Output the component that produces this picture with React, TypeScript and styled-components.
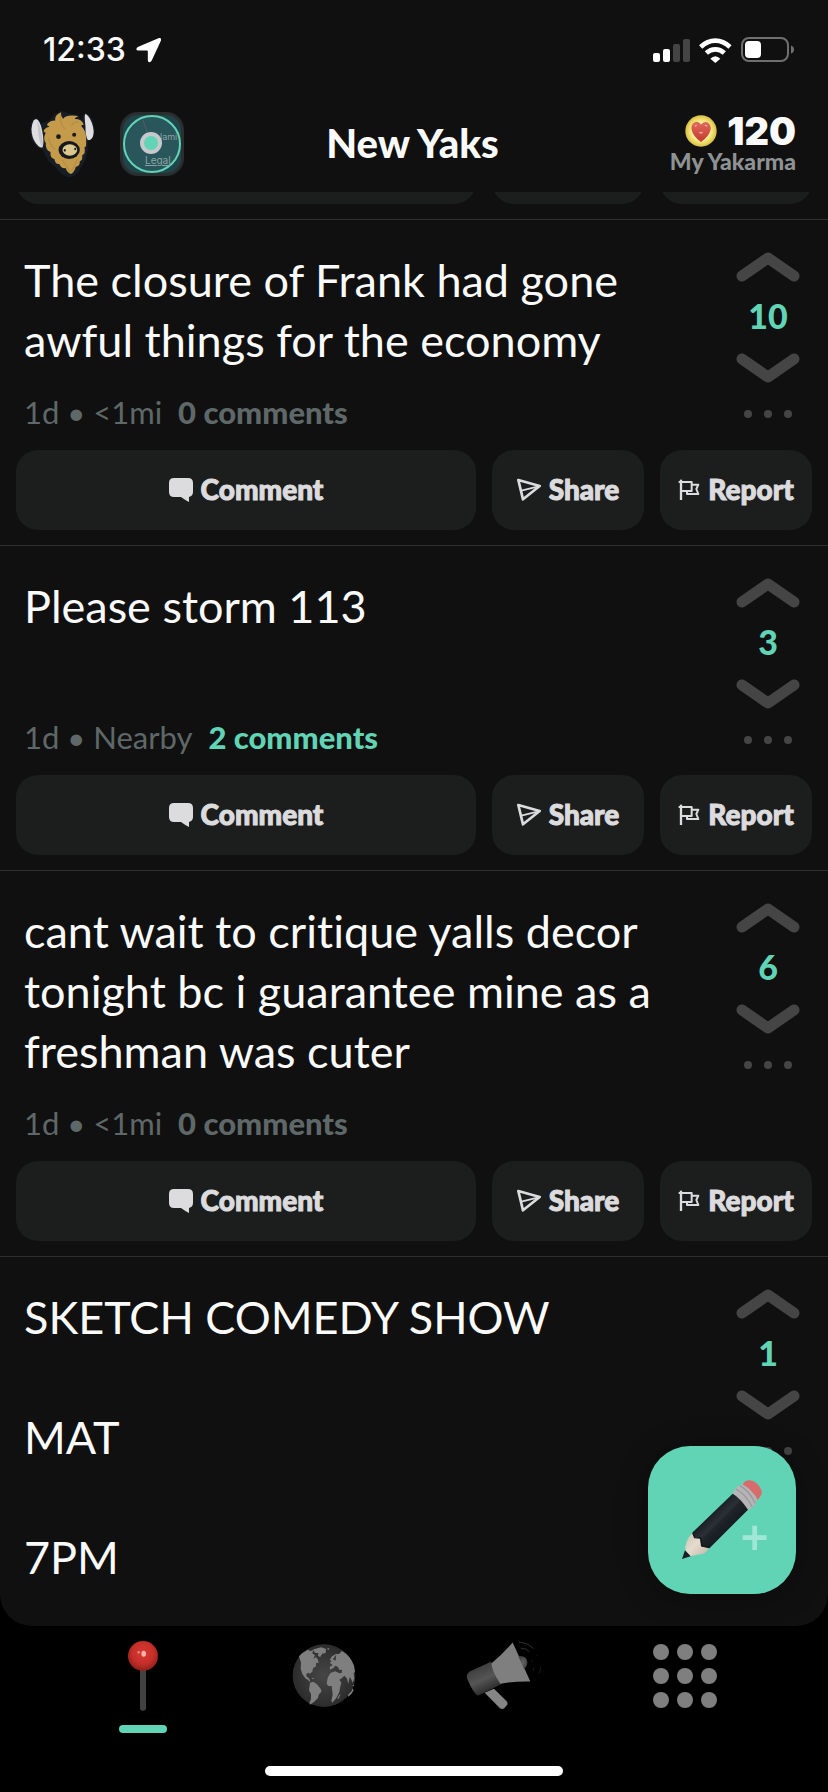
import React from "react";
import styled, { createGlobalStyle } from "styled-components";

const color = {
  bg: "#101010",
  panel: "#1c1e1d",
  line: "#2e2e2e",
  mint: "#61d4b5",
  text: "#fafafa",
  muted: "#5f6868",
  label: "#dcdbdd",
  vote: "#454545",
};

const GlobalStyle = createGlobalStyle`
  *, *::before, *::after { box-sizing: border-box; }
  body { margin: 0; background: #000; font-family: Lato, "Liberation Sans", sans-serif; }
  button { font: inherit; color: inherit; border: 0; padding: 0; margin: 0; background: none; cursor: pointer; }
  h1, p { margin: 0; }
  svg { display: block; flex: none; }
`;

const Screen = styled.div`
  display: flex;
  flex-direction: column;
  height: 100vh;
  overflow: hidden;
  background: #000;
  color: ${color.text};
`;

const StatusBar = styled.div`
  display: flex;
  align-items: center;
  justify-content: space-between;
  height: 100px;
  padding: 0 33px 0 43px;
  background: ${color.bg};
`;

const Clock = styled.div`
  display: flex;
  align-items: center;
  gap: 10px;
  font: 500 32px/40px Inter, sans-serif;
`;

const StatusIcons = styled.div`
  display: flex;
  align-items: center;
  gap: 9px;
`;

const Header = styled.header`
  display: grid;
  grid-template-columns: 1fr auto 1fr;
  align-items: center;
  height: 92px;
  padding: 0 32px 4px 29px;
  background: ${color.bg};
`;

const HeaderButtons = styled.div`
  display: flex;
  align-items: center;
  gap: 24px;
`;

const Title = styled.h1`
  padding-bottom: 3px;
  font-size: 40px;
  line-height: 44px;
  font-weight: 900;
`;

const Karma = styled.div`
  justify-self: end;
  padding-top: 2px;
  text-align: right;
`;

const KarmaScore = styled.div`
  display: flex;
  align-items: center;
  justify-content: flex-end;
  gap: 10px;
  font: 900 38px/32px Inter, sans-serif;
`;

const KarmaLabel = styled.div`
  font-size: 23px;
  line-height: 28px;
  font-weight: 900;
  color: #8e9293;
`;

const FeedFrame = styled.main`
  position: relative;
  flex: 1 1 0;
  min-height: 0;
  overflow: hidden;
  border-radius: 0 0 32px 32px;
  background: ${color.bg};
`;

const Post = styled.article`
  border-top: 1px solid ${color.line};
`;

const PostTop = styled.div`
  display: flex;
  gap: 32px;
  padding: 0 28px 0 24px;
`;

const PostBody = styled.div`
  flex: 1;
  padding: 30px 0 20px;
`;

const PostText = styled.p`
  min-height: 119px;
  font-size: 45px;
  line-height: 60px;
  font-variant-ligatures: none;
  white-space: pre-line;
`;

const Meta = styled.div`
  display: flex;
  gap: 16px;
  margin-top: 24px;
  font-size: 31px;
  line-height: 36px;
  color: ${color.muted};
`;

const Comments = styled.span<{ $active: boolean }>`
  font-weight: 900;
  color: ${(p) => (p.$active ? color.mint : color.muted)};
`;

const Votes = styled.div`
  display: flex;
  flex-direction: column;
  align-items: center;
  width: 64px;
  padding-top: 32px;
`;

const Score = styled.span`
  margin: 14px 0 17px;
  font-size: 34px;
  line-height: 40px;
  font-weight: 900;
  color: ${color.mint};
`;

const More = styled.button`
  padding-top: 27px;
`;

const Actions = styled.div`
  display: grid;
  grid-template-columns: 1fr 152px 152px;
  gap: 16px;
  padding: 0 16px 15px;
`;

const ClippedActions = styled.div`
  display: flex;
  flex-direction: column;
  justify-content: flex-end;
  height: 27px;
  overflow: hidden;
`;

const Action = styled.button`
  display: flex;
  align-items: center;
  justify-content: center;
  gap: 8px;
  height: 80px;
  border-radius: 22px;
  background: ${color.panel};
  color: ${color.label};
  font-size: 28px;
  font-weight: 900;
`;

const ActionLabel = styled.span`
  padding-bottom: 3px;
  -webkit-text-stroke: 1px ${color.label};
`;

const Compose = styled.button`
  position: absolute;
  right: 32px;
  bottom: 32px;
  width: 148px;
  height: 148px;
  border-radius: 42px;
  background: ${color.mint};
  box-shadow: 0 4px 32px rgba(0, 0, 0, 0.3);
`;

const TabBar = styled.nav`
  display: grid;
  grid-template-columns: repeat(4, 1fr);
  padding: 13px 53px 0;
`;

const Tab = styled.button`
  display: flex;
  flex-direction: column;
  align-items: center;
  gap: 13px;
  height: 127px;
`;

const TabIcon = styled.span`
  display: flex;
  align-items: center;
  height: 73px;
`;

const TabMarker = styled.span`
  width: 48px;
  height: 8px;
  border-radius: 4px;
  background: ${color.mint};
`;

const HomeBar = styled.div`
  width: 36%;
  height: 10px;
  margin: 0 auto 16px;
  border-radius: 5px;
  background: #fff;
`;

const LocationArrow = () => (
  <svg width="26" height="26" viewBox="406 111 77 77" fill="#fff">
    <path d="M474 114Q482 112 480 121L453 180Q450 186 446 186Q441 186 441 180V153Q441 151 438 151H413Q407 151 407 147Q407 143 413 140Z" />
  </svg>
);

const Signal = () => (
  <svg width="37" height="24" viewBox="0 0 37 24">
    <rect y="15" width="7" height="9" rx="2" fill="#fff" />
    <rect x="10" y="11" width="7" height="13" rx="2" fill="#fff" />
    <rect x="20" y="6" width="7" height="18" rx="2" fill="#444" />
    <rect x="30" y="1" width="7" height="23" rx="2" fill="#444" />
  </svg>
);

const Wifi = () => (
  <svg width="33" height="25" viewBox="856 110 99 75">
    <g fill="none" stroke="#fff" strokeWidth="14">
      <path d="M861 137Q881 118 905 118T949 137" />
      <path d="M878 155Q890 144 905 144T932 155" />
    </g>
    <path d="M890 172Q905 157 920 172L905 185Z" fill="#fff" />
  </svg>
);

const Battery = () => (
  <svg width="54" height="26" viewBox="0 0 54 26">
    <rect x="1" y="1" width="46" height="23" rx="7" fill="none" stroke="#6f6f6f" strokeWidth="2" />
    <rect x="4" y="4" width="16" height="17" rx="4" fill="#fff" />
    <path d="M50 8.500Q53 9.500 53 12.500T50 16.500Z" fill="#6f6f6f" />
  </svg>
);

const Yak = () => (
  <svg width="67" height="68" viewBox="88 336 200 204">
    <path d="M106 360Q90 366 92 410Q96 444 130 456Q140 490 166 506Q190 538 210 538Q232 534 244 508Q266 480 264 432Q284 420 284 394Q280 350 256 344Q246 350 248 368L232 350L206 346L182 338L162 352L150 366L136 372L124 376Z" fill="#161d24" />
    <path d="M108 363Q120 364 127 398Q134 432 128 448Q120 452 108 436Q95 418 95 394Q96 368 108 363Z" fill="#dedee0" />
    <path d="M112 368Q124 390 129 430Q132 444 127 448Q120 436 116 410Z" fill="#c4c5ca" />
    <path d="M256 348Q266 350 276 374Q285 400 279 416Q273 428 264 426Q256 412 257 386Q253 356 256 348Z" fill="#dedee0" />
    <path d="M166 368Q164 350 184 343Q182 354 190 362Q200 348 236 354Q226 358 224 363Q246 362 252 380Q246 380 244 384Q262 400 259 434Q260 446 254 448Q258 468 247 472Q249 488 240 490Q240 506 228 506Q224 522 213 528Q200 522 198 510Q186 514 178 498Q166 500 164 484Q150 480 152 462Q136 456 138 436Q128 418 138 404Q128 404 134 394Q140 386 150 386Q138 384 144 376Q154 366 166 368Z" fill="#c49b4b" />
    <path d="M182 350Q180 380 196 394M236 372Q224 370 214 382M146 420Q152 444 166 454M188 486Q198 502 212 522M232 484Q224 504 216 518" fill="none" stroke="#af8540" strokeWidth="4" opacity=".6" />
    <circle cx="176" cy="416" r="7" fill="#17191b" />
    <circle cx="223" cy="410" r="6" fill="#17191b" />
    <ellipse cx="208" cy="456" rx="32" ry="27" fill="#15191e" />
    <ellipse cx="210" cy="456" rx="22" ry="17" fill="#dcc88f" />
    <ellipse cx="195" cy="457" rx="3" ry="4" fill="#222" />
    <ellipse cx="226" cy="453" rx="3" ry="4" fill="#222" />
  </svg>
);

const MapTile = () => (
  <svg width="64" height="64" viewBox="0 0 64 64">
    <rect width="64" height="64" rx="18" fill="#2b2e2f" />
    <rect x="3" y="3" width="58" height="58" rx="15" fill="#20444b" />
    <circle cx="32" cy="32" r="28" fill="#29565a" stroke="#61d4b5" strokeWidth="2" />
    <path d="M23 8L27 20" stroke="#5a5a60" strokeWidth="1" />
    <text x="40" y="28" fill="#8ca3a5" fontSize="9" fontFamily="Inter, sans-serif">lami</text>
    <text x="25" y="52" fill="#8ca3a5" fontSize="10" fontFamily="Inter, sans-serif" textDecoration="underline">Legal</text>
    <circle cx="31" cy="31" r="11" fill="#c7c8cc" />
    <circle cx="31" cy="31" r="7" fill="#61d4b5" />
  </svg>
);

const Coin = () => (
  <svg width="32" height="32" viewBox="808 346 98 98">
    <defs>
      <radialGradient id="coin">
        <stop offset="0.600" stopColor="#fff3a0" />
        <stop offset="1" stopColor="#e3cf4c" />
      </radialGradient>
      <linearGradient id="heart" x2="0" y2="1">
        <stop stopColor="#e06a5c" />
        <stop offset="1" stopColor="#c23b31" />
      </linearGradient>
    </defs>
    <circle cx="857" cy="395" r="48" fill="#dcc650" />
    <circle cx="857" cy="395" r="43" fill="url(#coin)" />
    <path d="M857 375Q850 364 838 368Q826 374 828 390Q832 412 857 429Q882 412 887 390Q888 374 876 368Q864 365 857 375Z" fill="url(#heart)" />
    <path d="M838 380L844 377M869 377L876 380M852 398L857 402L862 398" fill="none" stroke="#f3a79c" strokeWidth="4" />
  </svg>
);

const Chevron = ({ down = false }: { down?: boolean }) => (
  <svg width="64" height="30" viewBox="0 0 64 30">
    <path d={down ? "M6 6L32 24L58 6" : "M6 24L32 6L58 24"} fill="none" stroke={color.vote} strokeWidth="11" strokeLinecap="round" strokeLinejoin="round" />
  </svg>
);

const Dots = () => (
  <svg width="48" height="8" viewBox="0 0 48 8" fill={color.vote}>
    <circle cx="4" cy="4" r="4" />
    <circle cx="24" cy="4" r="4" />
    <circle cx="44" cy="4" r="4" />
  </svg>
);

const CommentIcon = () => (
  <svg width="24" height="24" viewBox="0 0 24 24" fill={color.label}>
    <path d="M5 0H19Q24 0 24 5V14Q24 18 20 19V24Q16 22 12 19H5Q0 19 0 14V5Q0 0 5 0Z" />
  </svg>
);

const ShareIcon = () => (
  <svg width="24" height="24" viewBox="75 115 72 72" fill="none" stroke={color.label} strokeWidth="8" strokeLinejoin="round">
    <path d="M79 121L143 139L93 179Z" />
    <path d="M88 153L140 140" strokeWidth="5" />
  </svg>
);

const FlagIcon = () => (
  <svg width="22" height="24" viewBox="562 116 66 72" fill="none" stroke={color.label} strokeWidth="6" strokeLinejoin="round">
    <path d="M571 121V182" strokeWidth="7" />
    <path d="M564 128H603V155H571" />
    <path d="M603 136H623L617 149L623 164H589V155" />
  </svg>
);

const Pencil = () => (
  <svg width="148" height="148" viewBox="84 78 444 444">
    <defs>
      <linearGradient id="shaft" x1="280" y1="280" x2="330" y2="330" gradientUnits="userSpaceOnUse">
        <stop stopColor="#1b2126" />
        <stop offset="0.350" stopColor="#2b3036" />
        <stop offset="0.500" stopColor="#1d2328" />
        <stop offset="1" stopColor="#161b20" />
      </linearGradient>
      <linearGradient id="wood" x1="200" y1="350" x2="250" y2="400" gradientUnits="userSpaceOnUse">
        <stop stopColor="#d2c6b7" />
        <stop offset="0.500" stopColor="#e5dccf" />
        <stop offset="1" stopColor="#cdc1b2" />
      </linearGradient>
    </defs>
    <path d="M368 194Q374 181 388 181Q412 182 425 212Q428 226 411 240Z" fill="#d86b6b" />
    <path d="M338 221Q342 204 356 197Q364 191 369 194Q382 199 398 218Q412 232 411 240Q406 262 385 270Z" fill="#b5b5b7" />
    <path d="M348 207Q379 224 397 262M360 197Q389 214 406 250" fill="none" stroke="#99999c" strokeWidth="4" />
    <path d="M338 221Q360 233 384 269L269 384L243 380L240 354L222 352L218 337Z" fill="url(#shaft)" />
    <path d="M218 338L224 352L240 356L245 378L267 383Q256 404 239 403L211 409L196 391Q194 362 218 338Z" fill="url(#wood)" />
    <path d="M218 338L224 353L242 354L245 378L268 383" fill="none" stroke="#101418" strokeWidth="4" />
    <path d="M195 391L212 409L186 417Z" fill="#192026" />
    <path d="M397 317H411V346H440V360H411V390H397V360H368V346H397Z" fill="#a0e7d7" />
  </svg>
);

const Pin = () => (
  <svg width="32" height="72" viewBox="144 88 96 216">
    <defs>
      <radialGradient id="ball" cx="0.500" cy="0.400" r="0.600">
        <stop stopColor="#d8382f" />
        <stop offset="0.600" stopColor="#c62f29" />
        <stop offset="1" stopColor="#8e1f1a" />
      </radialGradient>
    </defs>
    <rect x="183" y="170" width="18" height="130" rx="7" fill="#424242" />
    <circle cx="192" cy="136" r="45" fill="url(#ball)" />
    <ellipse cx="194" cy="129" rx="7" ry="9" fill="#f2b3ac" />
    <circle cx="179" cy="125" r="4" fill="#e78479" />
  </svg>
);

const Globe = () => (
  <svg width="64" height="65" viewBox="636 97 192 195">
    <defs>
      <radialGradient id="sea">
        <stop stopColor="#464646" />
        <stop offset="1" stopColor="#2c2c2c" />
      </radialGradient>
    </defs>
    <circle cx="732" cy="195" r="94" fill="url(#sea)" />
    <g fill="#7f7f7f">
      <path d="M657 137L666 128L684 117L690 121L700 119L697 128L705 134L700 145L708 139L714 147L716 158L708 156L708 167L699 173L697 183L689 189L685 186L679 190L680 198L686 202L690 209L691 214L683 207L676 203L667 190L662 174L663 156Z" />
      <path d="M698 117L712 113L724 110L738 115L737 127L727 129L720 140L713 134L716 127L706 127Z" />
      <path d="M690 216L700 213L711 221L723 236L724 243L716 252L714 262L702 274L690 282L688 277L693 265V250L687 239Z" />
      <path d="M756 137L768 130L777 130L786 121Q812 136 822 165L825 183L821 188L823 204L818 216L813 205L809 199L805 220L801 204L793 195L785 203L778 207L784 216L780 231L778 244L769 262L757 276L754 270L758 252L755 226H745L740 219L743 201L751 187L766 182L778 188L786 186L784 178L777 177L774 169L766 165L760 172L750 177L749 168L758 164L751 157L755 151L749 148Z" />
      <path d="M777 254L782 250L776 264L772 265ZM804 253L814 242L818 233L821 239L814 250L805 258ZM817 224L822 222L822 227ZM695 201L703 203L699 206ZM740 114L748 112L746 118ZM750 154L753 153L750 160Z" />
    </g>
    <path d="M767 168L774 178L770 180L765 173M778 181L786 179M760 147L766 139L765 149" fill="none" stroke="#393939" strokeWidth="4" />
  </svg>
);

const Megaphone = () => (
  <svg width="76" height="71" viewBox="136 92 228 212">
    <defs>
      <linearGradient id="barrel" x1="165" y1="175" x2="200" y2="250" gradientUnits="userSpaceOnUse">
        <stop stopColor="#3e3e3e" />
        <stop offset="0.500" stopColor="#555" />
        <stop offset="1" stopColor="#292929" />
      </linearGradient>
      <radialGradient id="cap">
        <stop stopColor="#656565" />
        <stop offset="1" stopColor="#414141" />
      </radialGradient>
    </defs>
    <path d="M192 250L220 238L258 275Q262 280 260 286L250 297Q244 300 238 296Z" fill="#858585" />
    <path d="M147 186L211 157L244 223L174 258Q164 258 149 228T140 194Z" fill="url(#barrel)" />
    <path d="M212 162Q244 136 276 99L329 216Q280 215 239 223Q215 188 212 162Z" fill="#7f7f7f" />
    <path d="M293 140Q319 138 320 158Q320 170 310 178Z" fill="url(#cap)" />
    <path d="M295 98Q322 100 339 118M300 116Q316 116 326 126" fill="none" stroke="#303030" strokeWidth="3" />
    <path d="M348 136L350 140M334 152L335 157M359 172Q361 183 355 191M338 176L339 184" fill="none" stroke="#1b1b1b" strokeWidth="3" />
  </svg>
);

const Grid = () => (
  <svg width="64" height="64" viewBox="0 0 64 64" fill="#7f7f7f">
    {[8, 32, 56].map((y) => [8, 32, 56].map((x) => <circle key={`${x}-${y}`} cx={x} cy={y} r="8" />))}
  </svg>
);

const actions = [
  { name: "Comment", icon: <CommentIcon /> },
  { name: "Share", icon: <ShareIcon /> },
  { name: "Report", icon: <FlagIcon /> },
];

const ActionRow = ({ bare = false }: { bare?: boolean }) => (
  <Actions>
    {actions.map(({ name, icon }) => (
      <Action key={name} type="button" aria-label={name}>
        {!bare && icon}
        {!bare && <ActionLabel>{name}</ActionLabel>}
      </Action>
    ))}
  </Actions>
);

type YakPost = { text: string; score: number; place: string; comments: number };

const posts: YakPost[] = [
  { text: "The closure of Frank had gone awful things for the economy", score: 10, place: "<1mi", comments: 0 },
  { text: "Please storm 113", score: 3, place: "Nearby", comments: 2 },
  { text: "cant wait to critique yalls decor tonight bc i guarantee mine as a freshman was cuter", score: 6, place: "<1mi", comments: 0 },
];

const PostVotes = ({ score }: { score: number }) => (
  <Votes>
    <button type="button" aria-label="Upvote"><Chevron /></button>
    <Score>{score}</Score>
    <button type="button" aria-label="Downvote"><Chevron down /></button>
    <More type="button" aria-label="More options"><Dots /></More>
  </Votes>
);

const tabs = [
  { name: "Nearby", icon: <Pin />, current: true },
  { name: "Explore", icon: <Globe />, current: false },
  { name: "Announcements", icon: <Megaphone />, current: false },
  { name: "More", icon: <Grid />, current: false },
];

export default function App() {
  return (
    <Screen>
      <GlobalStyle />
      <StatusBar>
        <Clock>12:33<LocationArrow /></Clock>
        <StatusIcons><Signal /><Wifi /><Battery /></StatusIcons>
      </StatusBar>
      <Header>
        <HeaderButtons>
          <button type="button" aria-label="Profile"><Yak /></button>
          <button type="button" aria-label="Map"><MapTile /></button>
        </HeaderButtons>
        <Title>New Yaks</Title>
        <Karma>
          <KarmaScore><Coin />120</KarmaScore>
          <KarmaLabel>My Yakarma</KarmaLabel>
        </Karma>
      </Header>
      <FeedFrame>
        <ClippedActions><ActionRow bare /></ClippedActions>
        {posts.map((post) => (
          <Post key={post.text}>
            <PostTop>
              <PostBody>
                <PostText>{post.text}</PostText>
                <Meta>
                  <span>1d • {post.place}</span>
                  <Comments $active={post.comments > 0}>{post.comments} comments</Comments>
                </Meta>
              </PostBody>
              <PostVotes score={post.score} />
            </PostTop>
            <ActionRow />
          </Post>
        ))}
        <Post>
          <PostTop>
            <PostBody>
              <PostText>{"SKETCH COMEDY SHOW\n\nMAT\n\n7PM"}</PostText>
            </PostBody>
            <PostVotes score={1} />
          </PostTop>
        </Post>
        <Compose type="button" aria-label="New yak"><Pencil /></Compose>
      </FeedFrame>
      <TabBar>
        {tabs.map((tab) => (
          <Tab key={tab.name} type="button" aria-label={tab.name} aria-current={tab.current ? "page" : undefined}>
            <TabIcon>{tab.icon}</TabIcon>
            {tab.current && <TabMarker />}
          </Tab>
        ))}
      </TabBar>
      <HomeBar />
    </Screen>
  );
}
